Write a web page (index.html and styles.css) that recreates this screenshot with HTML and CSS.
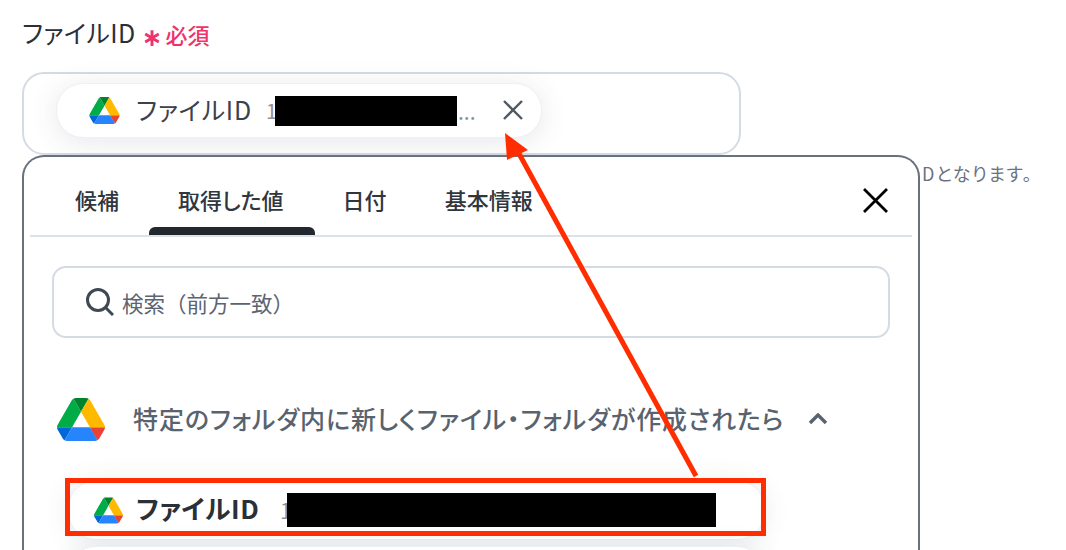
FILE: index.html
```html
<!DOCTYPE html>
<html lang="ja">
<head>
<meta charset="utf-8">
<title>ファイルID</title>
<link rel="stylesheet" href="styles.css">
</head>
<body>
<svg class="defs" width="0" height="0">
  <symbol id="drive" viewBox="0 0 87.3 78">
    <path d="m6.6 66.85 3.85 6.65c.8 1.4 1.95 2.5 3.3 3.3l13.75-23.8h-27.5c0 1.55.4 3.1 1.2 4.5z" fill="#0066da"/>
    <path d="m43.65 25-13.75-23.8c-1.35.8-2.5 1.9-3.3 3.3l-25.4 44a9.06 9.06 0 0 0 -1.2 4.5h27.5z" fill="#00ac47"/>
    <path d="m73.55 76.8c1.35-.8 2.5-1.9 3.3-3.3l1.6-2.75 7.65-13.25c.8-1.4 1.2-2.95 1.2-4.5h-27.502l5.852 11.5z" fill="#ea4335"/>
    <path d="m43.65 25 13.75-23.8c-1.35-.8-2.9-1.2-4.5-1.2h-18.5c-1.6 0-3.15.45-4.5 1.2z" fill="#00832d"/>
    <path d="m59.8 53h-32.3l-13.75 23.8c1.35.8 2.9 1.2 4.5 1.2h50.8c1.6 0 3.15-.45 4.5-1.2z" fill="#2684fc"/>
    <path d="m73.4 26.5-12.7-22c-.8-1.4-1.95-2.5-3.3-3.3l-13.75 23.8 16.15 28h27.45c0-1.55-.4-3.1-1.2-4.5z" fill="#ffba00"/>
  </symbol>
</svg>

<div class="page">
  <div class="label">
    <span class="label-text">ファイルID</span>
    <svg class="star" viewBox="0 0 16 16"><path d="M8 1V15M2 4.5 14 11.500M14 4.500 2 11.500"/></svg>
    <span class="req">必須</span>
  </div>

  <div class="field">
    <div class="chip">
      <svg class="chip-icon"><use href="#drive"/></svg>
      <span class="chip-name">ファイルID</span>
      <span class="chip-val">1</span>
      <span class="mask mask-chip"></span>
      <span class="dots">...</span>
      <svg class="chip-x" viewBox="0 0 20 20"><path d="M1 1 19 19M19 1 1 19"/></svg>
    </div>
  </div>

  <p class="hint">Dとなります。</p>
</div>

<div class="popup">
  <div class="tabs">
    <span class="tab tab-a">候補</span>
    <span class="tab tab-b active">取得した値</span>
    <span class="tab tab-c">日付</span>
    <span class="tab tab-d">基本情報</span>
    <svg class="popup-x" viewBox="0 0 25 25"><path d="M1 1 24 24M24 1 1 24"/></svg>
  </div>

  <div class="search">
    <svg class="search-icon" viewBox="0 0 28 28"><circle cx="12" cy="12" r="10.500"/><path d="M20 20 27 27"/></svg>
    <span>検索（前方一致）</span>
  </div>

  <div class="group">
    <svg class="group-icon"><use href="#drive"/></svg>
    <span class="group-title">特定のフォルダ内に新しくファイル・フォルダが作成されたら</span>
    <svg class="chevron" viewBox="0 0 20 12"><path d="M2 10 10 2 18 10"/></svg>
  </div>

  <div class="item">
    <svg class="item-icon"><use href="#drive"/></svg>
    <span class="item-name">ファイルID</span>
    <span class="item-val">1</span>
    <span class="mask mask-item"></span>
  </div>
  <div class="item item-next"></div>
</div>

<!-- annotations on top of the screenshot -->
<div class="red-box"></div>
<svg class="arrow" width="1066" height="550" viewBox="0 0 1066 550">
  <path d="M696 476 517 150" stroke="#ff2d00" stroke-width="5" fill="none"/>
  <path d="M505 133 528 150 507 160z" fill="#ff2d00"/>
</svg>
</body>
</html>
```
FILE: styles.css
```css
* {
  box-sizing: border-box;
}

html, body {
  margin: 0;
  height: 550px;
  overflow: hidden;
}

body {
  position: relative;
  background: #fff;
  color: #2a3038;
  font-family: "Noto Sans CJK JP", "Noto Sans", sans-serif;
  font-feature-settings: "palt";
}

.defs {
  position: absolute;
}

.page {
  padding: 15px 0 0 22px;
}

.label {
  display: flex;
  align-items: center;
  height: 37px;
}

.label-text {
  font-size: 25px;
  letter-spacing: 0.4px;
  line-height: 37px;
  margin-top: -2px;
}

.star {
  width: 18px;
  height: 18px;
  margin: 8px 0 0 7px;
  fill: none;
  stroke: #f0326a;
  stroke-width: 2.6;
}

.req {
  margin-left: 5px;
  color: #f0326a;
  font-size: 22px;
  font-weight: 500;
}

.field {
  width: 719px;
  height: 83px;
  margin-top: 20px;
  padding: 9px 0 0 32px;
  border: 2px solid #d5dbe4;
  border-radius: 22px;
}

.chip {
  display: flex;
  align-items: center;
  width: 486px;
  height: 55px;
  padding-left: 32px;
  background: #fff;
  border: 1px solid #edf0f4;
  border-radius: 27px;
  box-shadow: 0 4px 28px rgba(60, 70, 90, 0.13);
}

.chip-icon {
  width: 31px;
  height: 27px;
}

.chip-name {
  width: 117px;
  margin-left: 16px;
  font-size: 25px;
  letter-spacing: 0.8px;
  color: #3a424c;
  line-height: 34px;
  margin-top: -3px;
}

.chip-val {
  margin-left: 13px;
  width: 9px;
  font-size: 20px;
  color: #8a929c;
}

.mask {
  display: block;
  background: #000;
}

.mask-chip {
  width: 182px;
  height: 30px;
}

.dots {
  width: 20px;
  margin-left: 1px;
  color: #8a929c;
  font-size: 21px;
}

.chip-x {
  width: 20px;
  height: 20px;
  margin: -2px 0 0 25px;
  fill: none;
  stroke: #4f5864;
  stroke-width: 2.4;
}

.hint {
  margin: 5px 0 0;
  padding-right: 33px;
  text-align: right;
  font-size: 18px;
  letter-spacing: 1.5px;
  line-height: 26px;
  color: #6a727d;
}

.popup {
  position: absolute;
  left: 22px;
  top: 155px;
  width: 898px;
  height: 395px;
  padding: 0 6px;
  overflow: hidden;
  background: #fff;
  border: 2px solid #69717c;
  border-bottom: 0;
  border-radius: 22px 22px 0 0;
}

.tabs {
  position: relative;
  display: flex;
  height: 80px;
  border-bottom: 2px solid #dde1e8;
}

.tab {
  padding-top: 26px;
  font-size: 22px;
  line-height: 32px;
  font-weight: 500;
  color: #30363e;
  white-space: nowrap;
}

.tab-a {
  margin-left: 45px;
}

.tab-b {
  margin-left: 59px;
}

.tab-c {
  margin-left: 59px;
}

.tab-d {
  margin-left: 58px;
}

.active::after {
  content: "";
  position: absolute;
  left: 119px;
  bottom: 0;
  width: 166px;
  height: 8px;
  background: #22282e;
  border-radius: 6px 6px 0 0;
}

.popup-x {
  position: absolute;
  left: 833px;
  top: 31px;
  width: 25px;
  height: 25px;
  fill: none;
  stroke: #000;
  stroke-width: 2.8;
}

.search {
  display: flex;
  align-items: center;
  width: 838px;
  height: 72px;
  margin: 29px 0 0 22px;
  padding-left: 32px;
  border: 2px solid #d5dbe4;
  border-radius: 14px;
  font-size: 21.500px;
  font-feature-settings: normal;
  color: #5b6470;
}

.search-icon {
  width: 28px;
  height: 28px;
  margin-right: 8px;
  fill: none;
  stroke: #3f4853;
  stroke-width: 3;
}

.group {
  display: flex;
  align-items: center;
  height: 44px;
  margin: 59px 0 0 27px;
}

.group-icon {
  width: 48px;
  height: 43px;
}

.group-title {
  margin-left: 28px;
  font-size: 25px;
  letter-spacing: 0.9px;
  line-height: 36px;
  margin-top: -3px;
  font-weight: 500;
  color: #59636f;
  white-space: nowrap;
}

.chevron {
  width: 20px;
  height: 12px;
  margin-left: 24px;
  fill: none;
  stroke: #59636f;
  stroke-width: 3.4;
}

.item {
  display: flex;
  align-items: center;
  flex: none;
  width: 697px;
  height: 60px;
  margin: 39px 0 0 38px;
  padding-left: 25px;
  background: #fff;
  border: 1px solid #eceff3;
  border-radius: 28px;
  box-shadow: 0 2px 26px rgba(60, 70, 90, 0.12);
}

.item-next {
  margin-top: 6px;
}

.item-icon {
  width: 29px;
  height: 27px;
}

.item-name {
  width: 127px;
  margin-left: 13px;
  font-size: 26px;
  letter-spacing: 0.6px;
  font-weight: 700;
  line-height: 34px;
  margin-top: -5px;
  color: #2a3038;
}

.item-val {
  width: 7px;
  margin-left: 17px;
  font-size: 21px;
  color: #8a929c;
}

.mask-item {
  width: 429px;
  height: 34px;
}

.red-box {
  position: absolute;
  left: 65px;
  top: 478px;
  width: 701px;
  height: 58px;
  border: 5px solid #ff2d00;
}

.arrow {
  position: absolute;
  left: 0;
  top: 0;
}
```
